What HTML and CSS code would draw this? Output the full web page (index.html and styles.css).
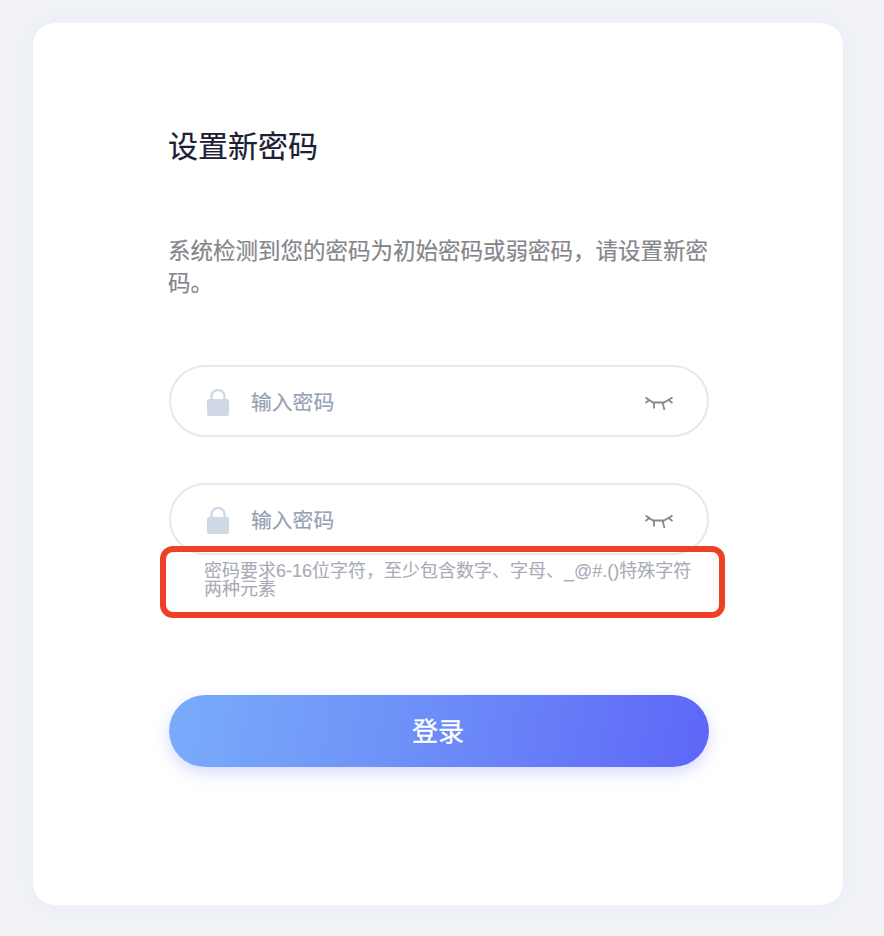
FILE: index.html
```html
<!DOCTYPE html>
<html lang="zh-CN">
<head>
  <meta charset="UTF-8" />
  <title>设置新密码</title>
  <link rel="stylesheet" href="styles.css">
</head>
<body>
  <div class="card">
    <h2 class="title">设置新密码</h2>
    <p class="desc">系统检测到您的密码为初始密码或弱密码，请设置新密码。</p>

    <form class="form">
      <div class="field">
        <svg class="lock" viewBox="0 0 22 27"><path d="M4.500 11V7a6.500 6 0 0 1 13 0v4" fill="none" stroke="#d0d7e5" stroke-width="2.400"/><rect x="0" y="10" width="22" height="17" rx="2" fill="#d0d7e5"/></svg>
        <input class="input" type="password" placeholder="输入密码" />
        <svg class="eye" viewBox="0 0 28 15"><path d="M0.500 1.500L8 6.500H19L27.500 1.500M0.500 7L5 3.500M27.500 7L23 3.500M9 6.500V12.500M17.500 6.500L19.500 14" fill="none" stroke="#868892" stroke-width="1.800"/></svg>
      </div>
      <div class="field field-second">
        <svg class="lock" viewBox="0 0 22 27"><path d="M4.500 11V7a6.500 6 0 0 1 13 0v4" fill="none" stroke="#d0d7e5" stroke-width="2.400"/><rect x="0" y="10" width="22" height="17" rx="2" fill="#d0d7e5"/></svg>
        <input class="input" type="password" placeholder="输入密码" />
        <svg class="eye" viewBox="0 0 28 15"><path d="M0.500 1.500L8 6.500H19L27.500 1.500M0.500 7L5 3.500M27.500 7L23 3.500M9 6.500V12.500M17.500 6.500L19.500 14" fill="none" stroke="#868892" stroke-width="1.800"/></svg>
      </div>
      <div class="hint">密码要求6-16位字符，至少包含数字、字母、_@#.()特殊字符两种元素</div>
      <div class="mark"></div>
      <button class="submit" type="button">登录</button>
    </form>
  </div>
</body>
</html>
```

FILE: styles.css
```css
* { box-sizing: border-box; }
html, body { height: 100%; }
body {
  margin: 0;
  padding: 23px 41px 31px 33px;
  background: #f1f3f7;
  font-family: "Liberation Sans", "Noto Sans CJK SC", sans-serif;
}

.card {
  height: 882px;
  padding: 104px 134px 0 135px;
  background: #fff;
  border-radius: 22px;
  box-shadow: 0 0 30px rgba(200, 208, 225, 0.2);
}

.title {
  margin: 0;
  font-size: 30px;
  line-height: 40px;
  font-weight: 400;
  color: #1c2033;
  -webkit-text-stroke: 0.2px #1c2033;
}

.desc {
  margin: 69px 0 0;
  font-size: 22.5px;
  line-height: 32px;
  color: #85868b;
  -webkit-text-stroke: 0.2px #85868b;
}

.form { position: relative; margin: 65px 0 0 1px; }

.field {
  display: flex;
  align-items: center;
  height: 72px;
  padding: 0 34px 0 36px;
  border: 2px solid #e4e8f0;
  border-radius: 36px;
}
.field-second { margin-top: 46px; }

.lock { flex: none; width: 22px; height: 27px; margin-top: 2px; }
.eye { flex: none; width: 28px; height: 15px; margin-top: 4px; }

.input {
  flex: 1;
  min-width: 0;
  margin-left: 22px;
  padding: 3px 0 0;
  border: none;
  outline: none;
  background: transparent;
  font-family: inherit;
  font-size: 20.8px;
}
.input::placeholder { color: #97a1b5; opacity: 1; -webkit-text-stroke: 0.2px #97a1b5; }

.hint {
  margin: 7px 0 0;
  padding: 0 16px 0 35px;
  font-size: 18px;
  line-height: 18px;
  color: #a9abb6;
  -webkit-text-stroke: 0.1px #a9abb6;
}

/* rote Markierung im Screenshot */
.mark {
  position: absolute;
  left: -9px;
  top: 181px;
  width: 565px;
  height: 72px;
  border: 6px solid #ee4026;
  border-radius: 13px;
}

.submit {
  display: block;
  width: 100%;
  height: 72px;
  margin-top: 97px;
  padding: 0 2px 3px 0;
  border: none;
  border-radius: 36px;
  background: linear-gradient(100deg, #79acfa 0%, #6f93f8 40%, #5e66f8 100%);
  box-shadow: 0 6px 16px rgba(110, 130, 248, 0.28);
  font-family: inherit;
  font-size: 26px;
  color: #fff;
  -webkit-text-stroke: 0.3px #fff;
}
```
